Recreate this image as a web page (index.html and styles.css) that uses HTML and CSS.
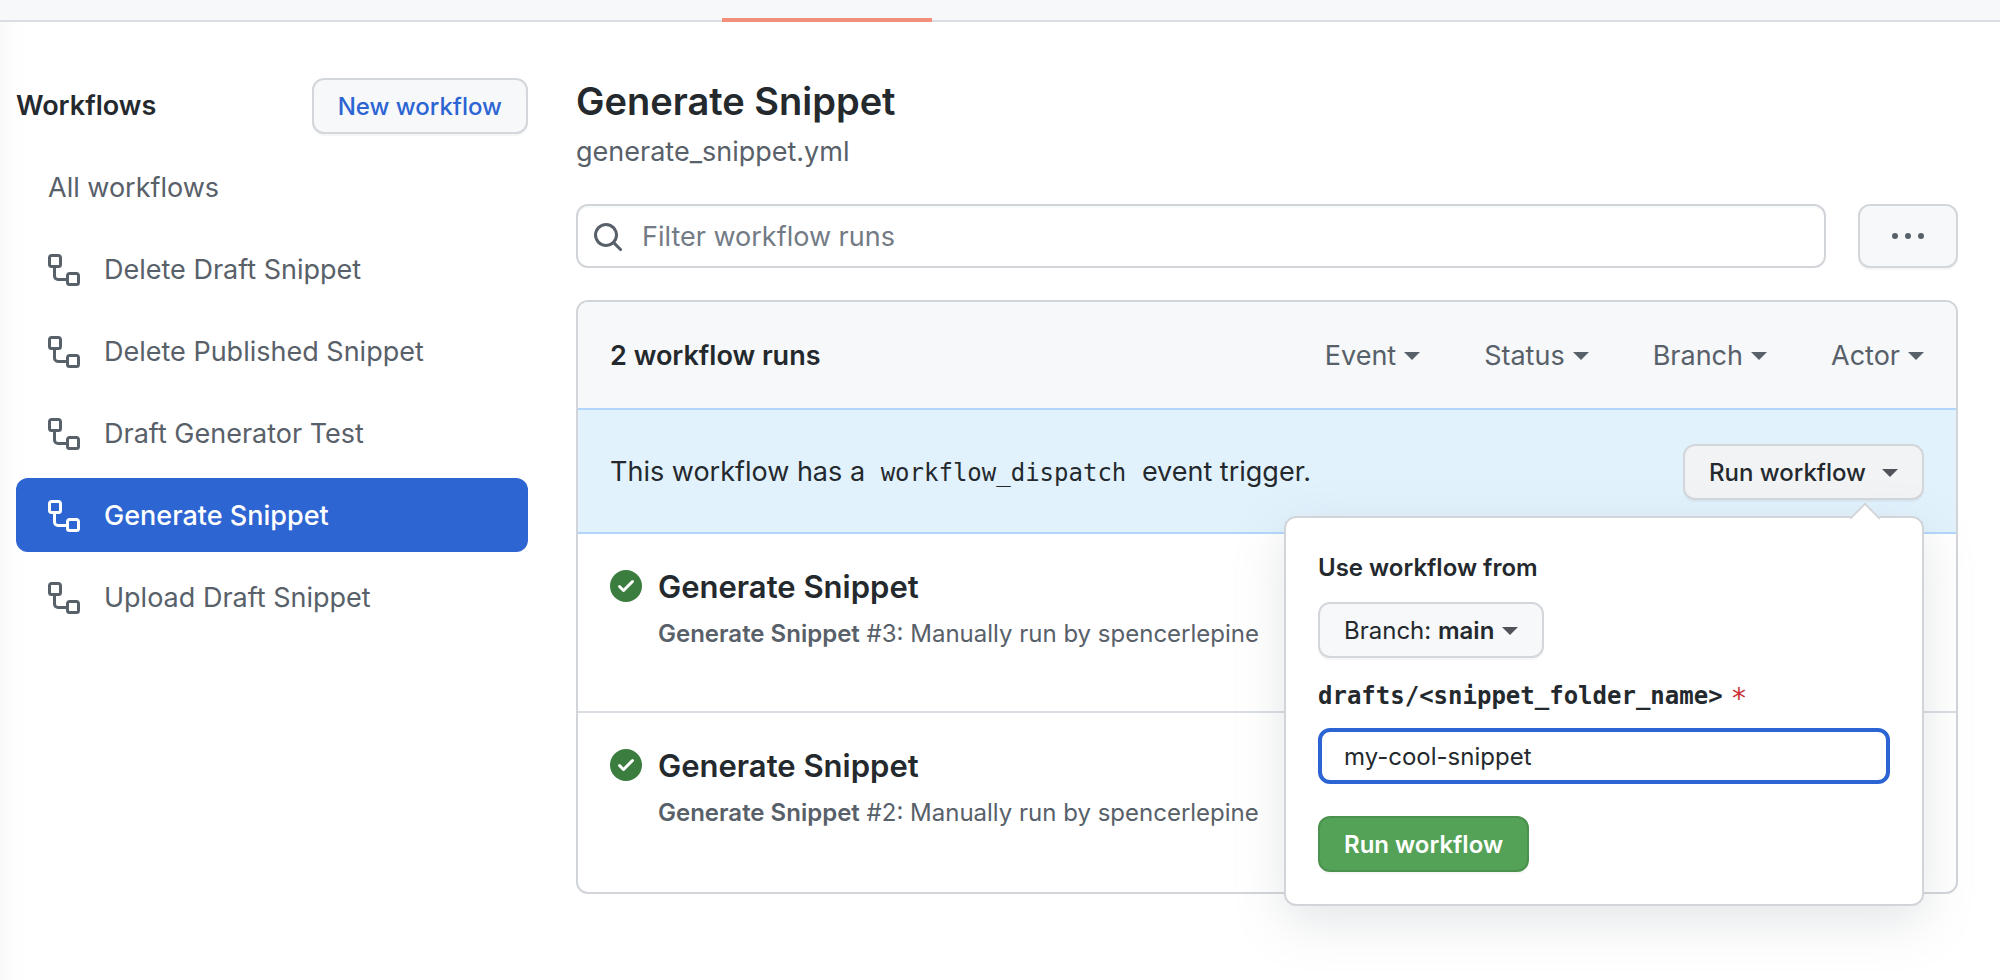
FILE: index.html
```html
<!DOCTYPE html>
<html lang="en">
<head>
<meta charset="utf-8">
<title>Generate Snippet · Workflow runs</title>
<link rel="stylesheet" href="styles.css">
</head>
<body>
<svg class="sprite" aria-hidden="true">
  <symbol id="workflow" viewBox="0 0 16 16"><path fill-rule="evenodd" d="M0 1.75C0 .784.784 0 1.75 0h3.5C6.216 0 7 .784 7 1.75v3.5A1.75 1.75 0 015.25 7H4v4a1 1 0 001 1h4v-1.25C9 9.784 9.784 9 10.75 9h3.5c.966 0 1.75.784 1.75 1.75v3.5A1.75 1.75 0 0114.25 16h-3.5A1.75 1.75 0 019 14.25v-.75H5A2.5 2.5 0 012.5 11V7h-.75A1.75 1.75 0 010 5.25v-3.5zm1.75-.25a.25.25 0 00-.25.25v3.5c0 .138.112.25.25.25h3.5a.25.25 0 00.25-.25v-3.5a.25.25 0 00-.25-.25h-3.5zm9 9a.25.25 0 00-.25.25v3.5c0 .138.112.25.25.25h3.5a.25.25 0 00.25-.25v-3.5a.25.25 0 00-.25-.25h-3.5z"/></symbol>
  <symbol id="success" viewBox="0 0 16 16"><path fill-rule="evenodd" d="M8 16A8 8 0 108 0a8 8 0 000 16zm3.78-9.72a.75.75 0 00-1.06-1.06L6.75 9.19 5.28 7.72a.75.75 0 00-1.06 1.06l2 2a.75.75 0 001.06 0l4.5-4.5z"/></symbol>
  <symbol id="search" viewBox="0 0 16 16"><path fill-rule="evenodd" d="M11.5 7a4.499 4.499 0 11-8.998 0A4.499 4.499 0 0111.5 7zm-.82 4.74a6 6 0 111.06-1.06l3.04 3.04a.75.75 0 11-1.06 1.06l-3.04-3.04z"/></symbol>
</svg>
<header class="tabs"><span class="tabs-current"></span></header>
<div class="layout">
  <aside class="sidebar">
    <div class="sidebar-head">
      <h2 class="sidebar-title">Workflows</h2>
      <a class="btn btn-link" href="#">New workflow</a>
    </div>
    <nav class="menu" aria-label="Workflows">
      <a class="menu-item" href="#">All workflows</a>
      <a class="menu-item" href="#"><svg class="icon"><use href="#workflow"/></svg>Delete Draft Snippet</a>
      <a class="menu-item" href="#"><svg class="icon"><use href="#workflow"/></svg>Delete Published Snippet</a>
      <a class="menu-item" href="#"><svg class="icon"><use href="#workflow"/></svg>Draft Generator Test</a>
      <a class="menu-item is-active" href="#" aria-current="page"><svg class="icon"><use href="#workflow"/></svg>Generate Snippet</a>
      <a class="menu-item" href="#"><svg class="icon"><use href="#workflow"/></svg>Upload Draft Snippet</a>
    </nav>
  </aside>
  <main class="content">
    <h1 class="title">Generate Snippet</h1>
    <p class="filename">generate_snippet.yml</p>
    <div class="toolbar">
      <label class="search">
        <svg class="icon search-icon" aria-hidden="true"><use href="#search"/></svg>
        <input class="search-input" type="text" placeholder="Filter workflow runs" aria-label="Filter workflow runs">
      </label>
      <button class="btn btn-more" type="button" aria-label="More options"><svg class="dots" viewBox="0 0 34 8"><circle cx="4" cy="4" r="3"/><circle cx="17" cy="4" r="3"/><circle cx="30" cy="4" r="3"/></svg></button>
    </div>
    <section class="runs">
      <div class="runs-head">
        <strong class="runs-count">2 workflow runs</strong>
        <div class="filters">
          <button class="filter" type="button">Event<span class="caret"></span></button>
          <button class="filter" type="button">Status<span class="caret"></span></button>
          <button class="filter" type="button">Branch<span class="caret"></span></button>
          <button class="filter" type="button">Actor<span class="caret"></span></button>
        </div>
      </div>
      <div class="dispatch">
        <p class="dispatch-text">This workflow has a <code class="code">workflow_dispatch</code> event trigger.</p>
        <div class="dispatch-menu">
          <button class="btn btn-open" type="button" aria-expanded="true">Run workflow<span class="caret"></span></button>
          <form class="popover">
            <p class="popover-title">Use workflow from</p>
            <button class="btn btn-branch" type="button"><span>Branch: <b>main</b></span><span class="caret"></span></button>
            <label class="field-label" for="folder">drafts/&lt;snippet_folder_name&gt;<span class="required">*</span></label>
            <input class="field" id="folder" type="text" value="my-cool-snippet">
            <button class="btn btn-primary" type="button">Run workflow</button>
          </form>
        </div>
      </div>
      <article class="run">
        <svg class="icon run-icon" role="img" aria-label="Success"><use href="#success"/></svg>
        <div>
          <h3 class="run-title"><a href="#">Generate Snippet</a></h3>
          <p class="run-meta"><b>Generate Snippet</b> #3: Manually run by spencerlepine</p>
        </div>
      </article>
      <article class="run">
        <svg class="icon run-icon" role="img" aria-label="Success"><use href="#success"/></svg>
        <div>
          <h3 class="run-title"><a href="#">Generate Snippet</a></h3>
          <p class="run-meta"><b>Generate Snippet</b> #2: Manually run by spencerlepine</p>
        </div>
      </article>
    </section>
  </main>
</div>
</body>
</html>
```
FILE: styles.css
```css
* { box-sizing: border-box; }

body {
  margin: 0;
  min-height: 100vh;
  background: linear-gradient(to right, #f9f9f9, #fdfdfd 12px, #fff 28px);
  color: #24292e;
  font: 27px/40px Inter, "Liberation Sans", sans-serif;
}

h1, h2, h3, p { margin: 0; }
a { color: inherit; text-decoration: none; }
button, input { font: inherit; color: inherit; }
b, strong { font-weight: 600; }

.sprite { position: absolute; width: 0; height: 0; }
.icon { width: 32px; height: 32px; flex: none; fill: currentColor; }

.caret {
  border: 8px solid transparent;
  border-top-color: currentColor;
  border-bottom-width: 0;
}

.tabs {
  height: 22px;
  padding-left: 722px;
  display: flex;
  align-items: flex-end;
  background: #f6f8fa;
  border-bottom: 2px solid #d8dee4;
}
.tabs-current { width: 210px; height: 4px; margin-bottom: -2px; background: #f3907c; }

.layout {
  display: grid;
  grid-template-columns: 512px minmax(0, 1fr);
  gap: 48px;
  padding: 56px 42px 84px 16px;
}

.sidebar-head { display: flex; align-items: center; justify-content: space-between; }
.sidebar-title { font-size: 27px; font-weight: 600; }

.btn {
  display: flex;
  align-items: center;
  justify-content: center;
  height: 56px;
  padding: 2px 24px 0;
  border: 2px solid #d3d6da;
  border-radius: 12px;
  background: #f6f8fa;
  box-shadow: 0 2px 0 rgba(27, 31, 35, .04);
  font-size: 24px;
  font-weight: 500;
  white-space: nowrap;
}
.btn-link { color: #2c64d4; }

.menu { display: flex; flex-direction: column; gap: 8px; margin-top: 16px; }
.menu-item {
  display: flex;
  align-items: center;
  gap: 24px;
  height: 74px;
  padding: 2px 32px 0;
  border-radius: 12px;
  color: #586069;
}
.menu-item.is-active { background: #2d65d2; color: #fff; font-weight: 500; }

.title { font-size: 38px; font-weight: 600; line-height: 46px; }
.filename { margin-top: 8px; color: #586069; }

.toolbar { display: flex; gap: 32px; margin-top: 32px; }
.search {
  flex: 1;
  display: flex;
  align-items: center;
  gap: 18px;
  height: 64px;
  padding: 2px 14px 0;
  border: 2px solid #d1d5da;
  border-radius: 12px;
  background: #fff;
  box-shadow: inset 0 2px 0 rgba(225, 228, 232, .2);
}
.search-icon { color: #586069; }
.search-input { flex: 1; min-width: 0; border: 0; padding: 0; outline: 0; background: none; }
.search-input::placeholder { color: #737b85; opacity: 1; }
.btn-more { height: 64px; padding: 0 31px; }
.dots { width: 34px; height: 8px; fill: #586069; }

.runs { margin-top: 32px; border: 2px solid #d1d5da; border-radius: 12px; }
.runs-head {
  display: flex;
  align-items: center;
  justify-content: space-between;
  height: 106px;
  padding: 2px 32px 0;
  background: #f6f8fa;
  border-radius: 10px 10px 0 0;
}
.filters { display: flex; gap: 64px; }
.filter {
  display: flex;
  align-items: center;
  gap: 8px;
  padding: 0;
  border: 0;
  background: none;
  color: #586069;
}

.dispatch {
  display: flex;
  align-items: center;
  justify-content: space-between;
  height: 126px;
  padding: 2px 32px 0;
  background: #e1f2fd;
  border: solid #b2d5fb;
  border-width: 2px 0;
}
.code { padding: 0 8px; font: 24px "DejaVu Sans Mono", monospace; }
.dispatch-menu { position: relative; }
.btn-open { gap: 16px; background: #f2f3f5; }
.btn .caret { color: #505359; }

.popover {
  position: absolute;
  z-index: 1;
  top: 72px;
  right: 0;
  width: 640px;
  padding: 30px 32px 32px;
  display: flex;
  flex-direction: column;
  align-items: flex-start;
  background: #fff;
  border: 2px solid #d1d5da;
  border-radius: 12px;
  box-shadow: 0 16px 48px rgba(149, 157, 165, .25);
  font-size: 24px;
}
.popover::before {
  content: "";
  position: absolute;
  top: -11px;
  right: 46px;
  width: 20px;
  height: 20px;
  background: #fff;
  border: solid #d1d5da;
  border-width: 2px 0 0 2px;
  transform: rotate(45deg);
}
.popover-title { font-weight: 600; }
.btn-branch { margin-top: 14px; gap: 8px; font-weight: 400; }
.field-label {
  display: flex;
  gap: 8px;
  margin-top: 18px;
  font: bold 24px/40px "DejaVu Sans Mono", monospace;
}
.required { padding-top: 6px; color: #cb2f37; font-size: 28px; font-weight: 400; line-height: 34px; }
.field {
  width: 100%;
  height: 56px;
  margin-top: 12px;
  padding: 0 22px;
  border: 4px solid #2c64d4;
  border-radius: 12px;
  outline: 0;
  background: #fff;
}
.btn-primary { margin-top: 32px; background: #54a258; border-color: #4a924e; color: #fff; font-weight: 600; }

.run { display: flex; gap: 16px; padding: 32px 32px 57px; }
.run:last-child { padding-bottom: 59px; }
.run + .run { border-top: 2px solid #d8dee4; }
.run-icon { margin-top: 4px; color: #3a7d3f; }
.run-title { font-size: 31px; font-weight: 600; line-height: 42px; }
.run-meta { margin-top: 6px; font-size: 24px; color: #586069; }
```
